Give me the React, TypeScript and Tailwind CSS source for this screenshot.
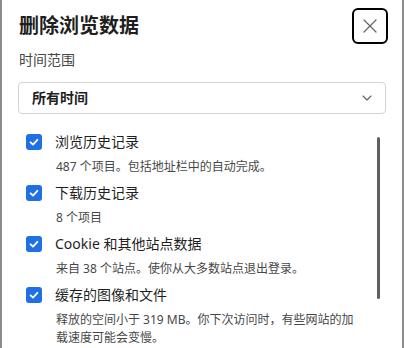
import React from "react";

const items = [
  { label: "浏览历史记录", desc: "487 个项目。包括地址栏中的自动完成。" },
  { label: "下载历史记录", desc: "8 个项目" },
  { label: "Cookie 和其他站点数据", desc: "来自 38 个站点。使你从大多数站点退出登录。" },
  { label: "缓存的图像和文件", desc: "释放的空间小于 319 MB。你下次访问时，有些网站的加载速度可能会变慢。" },
];

function Check() {
  return (
    <div className="mt-[2px] flex h-[16px] w-[16px] shrink-0 items-center justify-center rounded-[3px] bg-[#1f6fe5]">
      <svg width="16" height="16" viewBox="0 0 16 16" fill="none">
        <polyline points="4.6,8.3 7,10.6 11.4,5.8" stroke="white" strokeWidth="1.8" strokeLinecap="round" strokeLinejoin="round" />
      </svg>
    </div>
  );
}

export default function App() {
  return (
    <div
      className="flex h-[348px] w-[404px] overflow-hidden bg-[#8c8c8c] px-[2px]"
      style={{ fontFamily: '"Noto Sans", "Noto Sans CJK SC", sans-serif' }}
    >
      <div className="flex flex-1 flex-col bg-white">
        <div className="flex items-start justify-between pl-4 pr-[14px] pt-[8px]">
          <h1 className="ml-[1px] text-[20px] font-bold leading-[36px] text-[#1f1f1f]">删除浏览数据</h1>
          <div className="flex h-[36px] w-[36px] items-center justify-center rounded-[6px] border-2 border-black">
            <svg width="14" height="14" viewBox="0 0 14 14" fill="none">
              <path d="M1 1L13 13M13 1L1 13" stroke="#5f6368" strokeWidth="1.2" strokeLinecap="round" />
            </svg>
          </div>
        </div>
        <div className="ml-[17px] mt-[6px] text-[14px] leading-[20px] text-[#474747]">时间范围</div>
        <div className="mx-4 mt-[12px] flex h-[32px] items-center justify-between rounded-[4px] border border-[#d3d3d3] pl-[13px] pr-[13px]">
          <span className="text-[14px] font-bold leading-[20px] text-[#1f1f1f]">所有时间</span>
          <svg width="10" height="6" viewBox="0 0 10 6" fill="none">
            <path d="M1 1L5 5L9 1" stroke="#5f6368" strokeWidth="1.1" strokeLinecap="round" strokeLinejoin="round" />
          </svg>
        </div>
        <div className="mt-[18px] flex">
          <div className="flex flex-1 flex-col gap-[7px] pl-[24px]">
            {items.map((it) => (
              <div key={it.label} className="flex gap-[13px]">
                <Check />
                <div className="flex flex-col">
                  <div className="text-[14px] leading-[20px] text-[#1f1f1f]">{it.label}</div>
                  <div className="mt-[6px] w-[308px] pl-[1px] text-[12px] leading-[18px] text-[#474747]">{it.desc}</div>
                </div>
              </div>
            ))}
          </div>
          <div className="mr-[22px] mt-[5px] flex w-[3px] flex-col">
            <div className="h-[162px] w-[3px] rounded-[2px] bg-[#5f5f5f]" />
          </div>
        </div>
      </div>
    </div>
  );
}
